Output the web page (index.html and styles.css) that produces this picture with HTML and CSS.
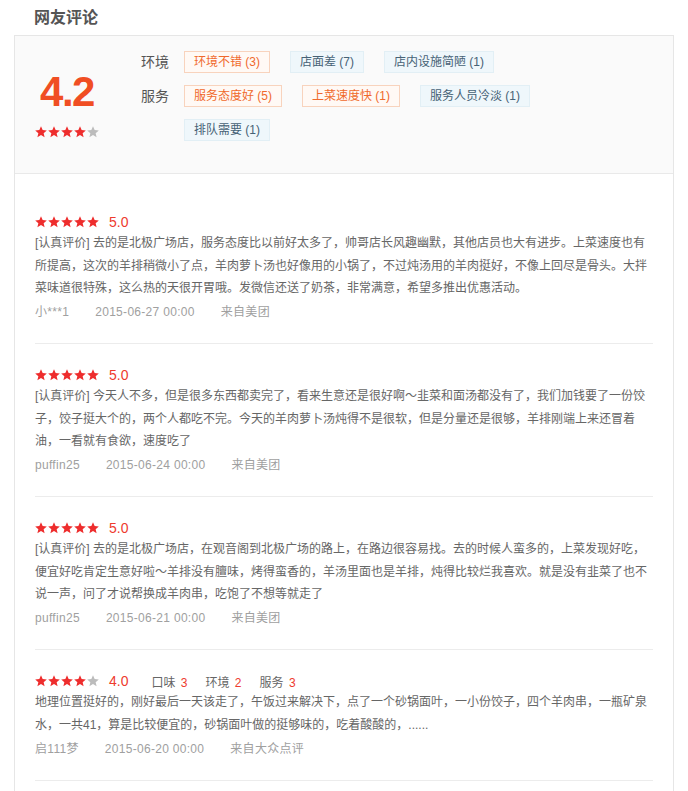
FILE: index.html
```html
<!DOCTYPE html>
<html lang="zh-CN">
<head>
<meta charset="utf-8">
<title>网友评论</title>
<link rel="stylesheet" href="styles.css">
</head>
<body>
<svg class="defs" width="0" height="0" aria-hidden="true">
  <defs>
    <polygon id="star" points="6,0.3 7.65,4.1 11.8,4.45 8.65,7.2 9.6,11.3 6,9.1 2.4,11.3 3.35,7.2 0.2,4.45 4.35,4.1"/>
  </defs>
</svg>
<div class="page">
  <h2 class="title">网友评论</h2>
  <div class="box">
    <div class="summary">
      <div class="score">
        <div class="score-num">4.2</div>
        <svg class="stars" viewBox="0 0 64 12" width="64" height="12">
          <use href="#star" x="0" class="on"/><use href="#star" x="13" class="on"/><use href="#star" x="26" class="on"/><use href="#star" x="39" class="on"/><use href="#star" x="52" class="off"/>
        </svg>
      </div>
      <div class="tags">
        <div class="tag-row">
          <span class="tag-label">环境</span>
          <div class="tag-list">
            <span class="tag good">环境不错 (3)</span>
            <span class="tag bad">店面差 (7)</span>
            <span class="tag bad">店内设施简陋 (1)</span>
          </div>
        </div>
        <div class="tag-row">
          <span class="tag-label">服务</span>
          <div class="tag-list">
            <span class="tag good">服务态度好 (5)</span>
            <span class="tag good">上菜速度快 (1)</span>
            <span class="tag bad">服务人员冷淡 (1)</span>
            <span class="tag bad">排队需要 (1)</span>
          </div>
        </div>
      </div>
    </div>
    <ul class="reviews">
      <li class="review">
        <div class="review-head">
          <svg class="stars" viewBox="0 0 64 12" width="64" height="12">
            <use href="#star" x="0" class="on"/><use href="#star" x="13" class="on"/><use href="#star" x="26" class="on"/><use href="#star" x="39" class="on"/><use href="#star" x="52" class="on"/>
          </svg>
          <span class="review-score">5.0</span>
        </div>
        <p class="review-text">[认真评价] 去的是北极广场店，服务态度比以前好太多了，帅哥店长风趣幽默，其他店员也大有进步。上菜速度也有所提高，这次的羊排稍微小了点，羊肉萝卜汤也好像用的小锅了，不过炖汤用的羊肉挺好，不像上回尽是骨头。大拌菜味道很特殊，这么热的天很开胃哦。发微信还送了奶茶，非常满意，希望多推出优惠活动。</p>
        <div class="review-meta"><span>小***1</span><span>2015-06-27 00:00</span><span>来自美团</span></div>
      </li>
      <li class="review">
        <div class="review-head">
          <svg class="stars" viewBox="0 0 64 12" width="64" height="12">
            <use href="#star" x="0" class="on"/><use href="#star" x="13" class="on"/><use href="#star" x="26" class="on"/><use href="#star" x="39" class="on"/><use href="#star" x="52" class="on"/>
          </svg>
          <span class="review-score">5.0</span>
        </div>
        <p class="review-text">[认真评价] 今天人不多，但是很多东西都卖完了，看来生意还是很好啊～韭菜和面汤都没有了，我们加钱要了一份饺子，饺子挺大个的，两个人都吃不完。今天的羊肉萝卜汤炖得不是很软，但是分量还是很够，羊排刚端上来还冒着油，一看就有食欲，速度吃了</p>
        <div class="review-meta"><span>puffin25</span><span>2015-06-24 00:00</span><span>来自美团</span></div>
      </li>
      <li class="review">
        <div class="review-head">
          <svg class="stars" viewBox="0 0 64 12" width="64" height="12">
            <use href="#star" x="0" class="on"/><use href="#star" x="13" class="on"/><use href="#star" x="26" class="on"/><use href="#star" x="39" class="on"/><use href="#star" x="52" class="on"/>
          </svg>
          <span class="review-score">5.0</span>
        </div>
        <p class="review-text">[认真评价] 去的是北极广场店，在观音阁到北极广场的路上，在路边很容易找。去的时候人蛮多的，上菜发现好吃，便宜好吃肯定生意好啦～羊排没有膻味，烤得蛮香的，羊汤里面也是羊排，炖得比较烂我喜欢。就是没有韭菜了也不说一声，问了才说帮换成羊肉串，吃饱了不想等就走了</p>
        <div class="review-meta"><span>puffin25</span><span>2015-06-21 00:00</span><span>来自美团</span></div>
      </li>
      <li class="review">
        <div class="review-head">
          <svg class="stars" viewBox="0 0 64 12" width="64" height="12">
            <use href="#star" x="0" class="on"/><use href="#star" x="13" class="on"/><use href="#star" x="26" class="on"/><use href="#star" x="39" class="on"/><use href="#star" x="52" class="off"/>
          </svg>
          <span class="review-score">4.0</span>
          <span class="sub-scores">
            <span class="sub">口味 <em>3</em></span>
            <span class="sub">环境 <em>2</em></span>
            <span class="sub">服务 <em>3</em></span>
          </span>
        </div>
        <p class="review-text">地理位置挺好的，刚好最后一天该走了，午饭过来解决下，点了一个砂锅面叶，一小份饺子，四个羊肉串，一瓶矿泉水，一共41，算是比较便宜的，砂锅面叶做的挺够味的，吃着酸酸的，......</p>
        <div class="review-meta"><span>启111梦</span><span>2015-06-20 00:00</span><span>来自大众点评</span></div>
      </li>
    </ul>
  </div>
</div>
</body>
</html>
```
FILE: styles.css
```css
* { box-sizing: border-box; }
html, body { margin: 0; padding: 0; background: #fff; }
body {
  font-family: "Liberation Sans", "Noto Sans CJK SC", sans-serif;
  color: #666;
  font-size: 12px;
}
.defs { position: absolute; width: 0; height: 0; overflow: hidden; }
.page { padding: 0 14px; }
.title {
  margin: 0;
  padding-left: 20px;
  height: 35px;
  line-height: 35px;
  font-size: 16px;
  font-weight: bold;
  color: #555;
}
.box {
  border: 1px solid #e6e6e6;
  border-bottom: none;
  min-height: 760px;
}
.summary {
  display: flex;
  background: #fafafa;
  border-bottom: 1px solid #e9e9e9;
  padding: 15px 0 32px;
}
.score {
  width: 64px;
  margin-left: 20px;
  margin-right: 42px;
  padding-top: 19px;
  display: flex;
  flex-direction: column;
  align-items: center;
}
.score-num {
  font-size: 42px;
  line-height: 44px;
  font-weight: bold;
  letter-spacing: -1.5px;
  color: #f04e23;
}
.score .stars { margin-top: 12px; }
.stars { display: block; }
.stars .on { fill: #ee2d2d; }
.stars .off { fill: #bcbcbc; }
.tags { display: flex; flex-direction: column; gap: 12px; }
.tag-row { display: flex; align-items: flex-start; }
.tag-label {
  width: 43px;
  flex: none;
  font-size: 14px;
  line-height: 22px;
  color: #555;
}
.tag-list {
  display: flex;
  flex-wrap: wrap;
  gap: 12px 20px;
  width: 420px;
}
.tag {
  height: 22px;
  line-height: 20px;
  padding: 0 9px;
  border: 1px solid;
  font-size: 12px;
  white-space: nowrap;
}
.tag.good { color: #f0692c; background: #fff9f5; border-color: #f8d3bd; }
.tag.bad { color: #466276; background: #eff7fb; border-color: #e2eff5; }
.reviews {
  list-style: none;
  margin: 0;
  padding: 17px 20px 0;
}
.review {
  padding: 21px 0 20px;
  border-bottom: 1px solid #ececec;
}
.review-head {
  display: flex;
  align-items: center;
  height: 20px;
}
.review-score {
  margin-left: 10px;
  font-size: 14px;
  color: #ee3b2e;
}
.sub-scores { display: flex; gap: 18px; margin-left: 23px; }
.sub { font-size: 12px; color: #666; }
.sub em { font-style: normal; color: #ee3b2e; margin-left: 2px; }
.review-text {
  margin: 0;
  line-height: 22.5px;
  color: #666;
}
.review-meta {
  margin-top: 1.5px;
  line-height: 22px;
  color: #a0a0a0;
  letter-spacing: 0.3px;
  display: flex;
  gap: 26px;
}
```
